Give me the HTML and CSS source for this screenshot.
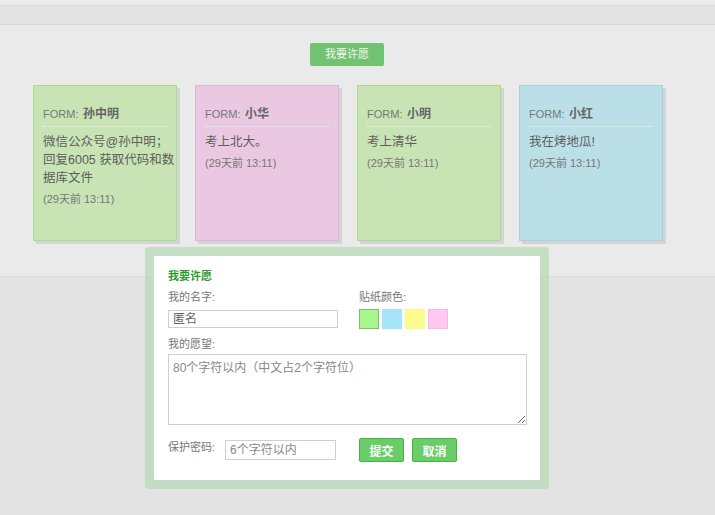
FILE: index.html
```html
<!DOCTYPE html>
<html lang="zh-CN">
<head>
<meta charset="utf-8">
<title>许愿墙</title>
<link rel="stylesheet" href="styles.css">
</head>
<body>
<div class="top-gap"></div>
<div class="header-band"></div>
<main class="wall">
  <div class="wall-inner">
    <div class="wish-btn-row"><button class="wish-btn">我要许愿</button></div>
    <div class="cards">
      <div class="card card-green">
        <div class="card-head"><span class="from">FORM:</span> <b class="name">孙中明</b></div>
        <div class="card-text">微信公众号@孙中明；<br>回复6005 获取代码和数<br>据库文件</div>
        <div class="card-time">(29天前 13:11)</div>
      </div>
      <div class="card card-pink">
        <div class="card-head"><span class="from">FORM:</span> <b class="name">小华</b></div>
        <div class="card-text">考上北大。</div>
        <div class="card-time">(29天前 13:11)</div>
      </div>
      <div class="card card-green">
        <div class="card-head"><span class="from">FORM:</span> <b class="name">小明</b></div>
        <div class="card-text">考上清华</div>
        <div class="card-time">(29天前 13:11)</div>
      </div>
      <div class="card card-blue">
        <div class="card-head"><span class="from">FORM:</span> <b class="name">小红</b></div>
        <div class="card-text">我在烤地瓜!</div>
        <div class="card-time">(29天前 13:11)</div>
      </div>
    </div>
  </div>
</main>

<div class="modal">
  <div class="modal-body">
    <div class="modal-title">我要许愿</div>
    <div class="row">
      <div class="col-left">
        <div class="label">我的名字:</div>
        <input class="text-input name-input" type="text" placeholder="匿名">
      </div>
      <div class="col-right">
        <div class="label">贴纸颜色:</div>
        <div class="swatches">
          <span class="swatch sw-green selected"></span>
          <span class="swatch sw-blue"></span>
          <span class="swatch sw-yellow"></span>
          <span class="swatch sw-pink"></span>
        </div>
      </div>
    </div>
    <div class="label wish-label">我的愿望:</div>
    <textarea class="wish-text" placeholder="80个字符以内（中文占2个字符位）"></textarea>
    <div class="row bottom-row">
      <div class="col-left pwd">
        <span class="label pwd-label">保护密码:</span>
        <input class="text-input pwd-input" type="text" placeholder="6个字符以内">
      </div>
      <div class="actions">
        <button class="act-btn">提交</button>
        <button class="act-btn">取消</button>
      </div>
    </div>
  </div>
</div>
</body>
</html>
```

FILE: styles.css
```css
html, body {
  margin: 0;
  padding: 0;
  background: #e3e3e3;
  font-family: "Liberation Sans", "Noto Sans CJK SC", sans-serif;
}

.top-gap {
  height: 5px;
  background: #ebebeb;
}

.header-band {
  height: 18px;
  background: #e3e3e3;
  border-top: 1px solid #d9d9d9;
  border-bottom: 1px solid #d9d9d9;
}

.wall {
  background: #eaeaea;
  height: 252px;
  border-bottom: 1px solid #dcdcdc;
  box-sizing: border-box;
  padding-top: 18px;
}

.wall-inner {
  width: 630px;
  margin-left: 33px;
}

.wish-btn-row {
  display: flex;
  justify-content: center;
  padding-right: 2px;
}

.wish-btn {
  width: 74px;
  height: 23px;
  border: none;
  border-radius: 2px;
  background: #71c371;
  color: #f4f4f4;
  font-family: "Liberation Sans", "Noto Sans CJK SC", sans-serif;
  font-size: 11px;
  padding: 0;
  line-height: 23px;
}

.cards {
  display: flex;
  gap: 18px;
  margin-top: 19px;
}

.card {
  width: 144px;
  height: 156px;
  box-sizing: border-box;
  border: 1px solid;
  padding: 17px 8px 0 9px;
  box-shadow: 3px 3px 0 rgba(0, 0, 0, 0.09);
  color: #666;
}

.card-green { background: #c8e4b4; border-color: #a6dd8f; }
.card-pink { background: #eac8e1; border-color: #e0b6d7; }
.card-blue { background: #badfe6; border-color: #a5d3e4; }

.card-head {
  line-height: 20px;
  padding-bottom: 2px;
  margin-right: 1px;
  border-bottom: 1px dotted #eef4ee;
  white-space: nowrap;
}

.card-pink .card-head { border-bottom-color: #f6eef4; }
.card-blue .card-head { border-bottom-color: #e8f4f6; }

.from {
  font-size: 11px;
  color: #777;
}

.name {
  font-size: 12px;
  font-weight: bold;
  color: #666;
}

.card-text {
  margin-top: 6px;
  font-size: 12.5px;
  line-height: 18px;
  color: #5e5e5e;
  white-space: nowrap;
}

.card-time {
  margin-top: 5px;
  font-size: 11px;
  line-height: 14px;
  color: #777;
}

/* modal */
.modal {
  position: absolute;
  left: 145px;
  top: 247px;
  width: 404px;
  box-sizing: border-box;
  border: 9px solid rgba(150, 210, 150, 0.45);
  border-radius: 4px;
}

.modal-body {
  background: #fff;
  padding: 13px 14px 18px;
}

.modal-title {
  font-size: 11px;
  font-weight: bold;
  color: #2e9b2e;
  line-height: 14px;
  margin-bottom: 7px;
}

.row {
  display: flex;
}

.col-left {
  width: 191px;
  flex: none;
}

.label {
  font-size: 11px;
  line-height: 14px;
  color: #777;
}

.col-left > .label,
.col-right > .label {
  margin-bottom: 6px;
}

.text-input {
  box-sizing: border-box;
  border: 1px solid #cfcfcf;
  font-family: "Liberation Sans", "Noto Sans CJK SC", sans-serif;
  font-size: 12px;
  padding: 0 4px;
  margin: 0;
  outline: none;
  background: #fff;
}

.text-input::placeholder { color: #666; }

.name-input {
  width: 170px;
  height: 18px;
  display: block;
}

.swatches {
  display: flex;
  gap: 3px;
  margin-top: -1px;
}

.swatch {
  width: 20px;
  height: 20px;
  box-sizing: border-box;
  border: 1px solid;
}

.sw-green { background: #a8f48e; border-color: #a8f48e; }
.sw-green.selected { border-color: #7dc35e; }
.sw-blue { background: #a6e4fb; border-color: #a6e4fb; }
.sw-yellow { background: #fdfa8d; border-color: #fdfa8d; }
.sw-pink { background: #fec8f1; border-color: #f8b6e6; }

.wish-label {
  margin-top: 8px;
  margin-bottom: 3px;
}

.wish-text {
  display: block;
  width: 359px;
  height: 71px;
  box-sizing: border-box;
  border: 1px solid #cfcfcf;
  margin: 0;
  padding: 3px 4px;
  font-family: "Liberation Sans", "Noto Sans CJK SC", sans-serif;
  font-size: 12px;
  outline: none;
}

.wish-text::placeholder { color: #888; }

.bottom-row {
  margin-top: 13px;
  align-items: center;
}

.pwd {
  display: flex;
  align-items: center;
}

.pwd-label {
  width: 57px;
}

.pwd-input {
  width: 111px;
  height: 20px;
}

.pwd-input::placeholder { color: #888; }

.actions {
  display: flex;
  gap: 8px;
}

.act-btn {
  width: 45px;
  height: 24px;
  box-sizing: border-box;
  border: 1px solid #3db83d;
  border-radius: 2px;
  background: #6acd6a;
  color: #fff;
  font-family: "Liberation Sans", "Noto Sans CJK SC", sans-serif;
  font-size: 12px;
  font-weight: bold;
  padding: 0;
}
```
